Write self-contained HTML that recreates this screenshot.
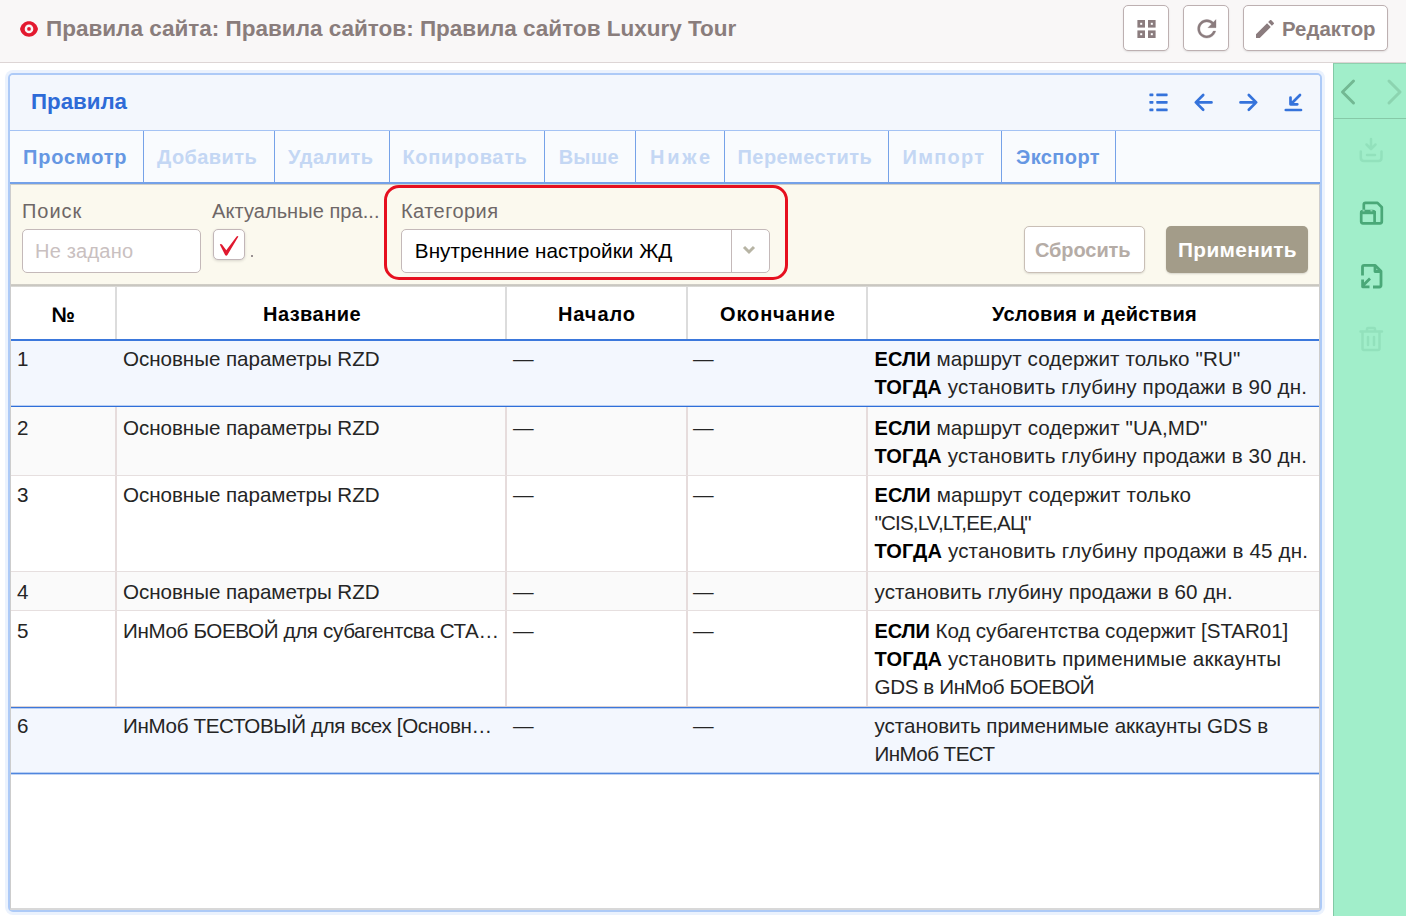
<!DOCTYPE html>
<html><head><meta charset="utf-8">
<style>
*{box-sizing:border-box;margin:0;padding:0}
html,body{width:1406px;height:916px;overflow:hidden;background:#fff;font-family:"Liberation Sans",sans-serif;color:#000}
.a{position:absolute}
.t{position:absolute;line-height:1;white-space:nowrap}
.b{font-weight:bold}
.hbtn{position:absolute;top:5px;height:46px;background:#fff;border:1px solid #bdb0b1;border-radius:5px;box-shadow:0 1px 2px rgba(0,0,0,.1)}
.sep{position:absolute;top:131px;width:1px;height:52px;background:#76a2e8}
.tt{color:#c4d7f4;font-size:20px;font-weight:bold;top:147px}
.ta{color:#6697e3}
.vl{position:absolute;width:2px;background:#e6dcdc}
.r{font-size:20.6px;color:#252525}
.r b{font-size:20px;color:#000}
</style></head><body>
<!-- header -->
<div class="a" style="left:0;top:0;width:1406px;height:62px;background:#f9f7f7"></div>
<div class="a" style="left:0;top:62px;width:1406px;height:1px;background:#ddd5d5"></div>
<svg class="a" style="left:16px;top:16px" width="28" height="26" viewBox="16 16 28 26"><path d="M20 28.9C22.5 18.6 35.5 18.6 38 28.9C35.5 39.2 22.5 39.2 20 28.9Z" fill="#e3192f"/><circle cx="29" cy="28.9" r="4.3" fill="#f9f7f7"/><circle cx="29" cy="28.9" r="1.9" fill="#e3192f"/></svg>
<div class="t b" style="left:46px;top:17.5px;font-size:22.5px;color:#8a7d7c">Правила сайта: Правила сайтов: Правила сайтов Luxury Tour</div>
<div class="hbtn" style="left:1123px;width:46px"></div>
<svg class="a" style="left:1137px;top:20px" width="19" height="19" viewBox="0 0 19 19"><g fill="#8b7c7e"><rect x="0.4" y="0" width="7.6" height="7.6"/><rect x="11" y="0" width="7.6" height="7.6"/><rect x="0.4" y="10.4" width="7.6" height="7.6"/><rect x="11" y="10.4" width="7.6" height="7.6"/></g><g fill="#fff"><rect x="3.2" y="2.8" width="2" height="2"/><rect x="13.8" y="2.8" width="2" height="2"/><rect x="3.2" y="13.2" width="2" height="2"/><rect x="13.8" y="13.2" width="2" height="2"/></g></svg>
<div class="hbtn" style="left:1183px;width:46px"></div>
<svg class="a" style="left:1192.7px;top:15.3px" width="27.6" height="27.6" viewBox="0 0 24 24"><path fill="#8b7c7e" stroke="#8b7c7e" stroke-width="0.3" d="M17.65 6.35C16.2 4.9 14.21 4 12 4c-4.42 0-7.99 3.58-7.99 8s3.57 8 7.99 8c3.730 0 6.84-2.55 7.73-6h-2.08c-.82 2.33-3.04 4-5.65 4-3.31 0-6-2.690-6-6s2.69-6 6-6c1.66 0 3.14.69 4.22 1.78L13 11h7V4l-2.35 2.35z"/></svg>
<div class="hbtn" style="left:1243px;width:145px"></div>
<svg class="a" style="left:1253px;top:16.5px" width="24" height="24" viewBox="0 0 24 24"><path fill="#8b7c7e" d="M3 17.25V21h3.75L17.81 9.94l-3.75-3.75L3 17.25zM20.71 7.04c.39-.39.39-1.02 0-1.41l-2.34-2.34c-.39-.39-1.02-.39-1.41 0l-1.830 1.83 3.75 3.75 1.83-1.83z"/></svg>
<div class="t b" style="left:1282px;top:19.2px;font-size:20.4px;color:#8a7d7c">Редактор</div>

<!-- sidebar -->
<div class="a" style="left:1333px;top:63px;width:73px;height:853px;background:#a1eeca;border-left:1px solid #83c9a6;border-top:1px solid #8fd0ae"></div>
<div class="a" style="left:1334px;top:118px;width:72px;height:1px;background:#86c9a7"></div>
<svg class="a" style="left:1333px;top:63px" width="73" height="56" viewBox="0 0 73 56"><path d="M20.5 18L9.5 29L20.5 40" fill="none" stroke="#72b893" stroke-width="3" stroke-linecap="round" stroke-linejoin="round"/><path d="M56 18L67 29L56 40" fill="none" stroke="#8cd4b0" stroke-width="3" stroke-linecap="round" stroke-linejoin="round"/></svg>

<!-- panel frame -->
<div class="a" style="left:8px;top:73px;width:1314px;height:839px;border:2px solid #adcaf7;border-radius:5px;box-shadow:0 0 0 3px #ebf2fd;background:#fff"></div>
<div class="a" style="left:10px;top:75px;width:1310px;height:55px;background:#f3f7fd;border-radius:4px 4px 0 0"></div>
<div class="a" style="left:10px;top:130px;width:1310px;height:1px;background:#a5c3f4"></div>
<div class="t b" style="left:31px;top:91px;font-size:22.3px;color:#2e6bd7">Правила</div>
<div class="a" style="left:10px;top:131px;width:1310px;height:51px;background:#f9fbfe"></div>
<div class="a" style="left:10px;top:182px;width:1310px;height:1.5px;background:#74a1e8"></div>
<div class="a" style="left:10px;top:183.5px;width:1310px;height:1px;background:#cfcfc8"></div>

<div class="sep" style="left:143px"></div>
<div class="sep" style="left:274px"></div>
<div class="sep" style="left:389px"></div>
<div class="sep" style="left:543.5px"></div>
<div class="sep" style="left:635px"></div>
<div class="sep" style="left:724px"></div>
<div class="sep" style="left:888px"></div>
<div class="sep" style="left:1001px"></div>
<div class="sep" style="left:1115px"></div>
<div class="t tt ta" style="left:23px;letter-spacing:0.798px">Просмотр</div>
<div class="t tt" style="left:157px;letter-spacing:0.403px">Добавить</div>
<div class="t tt" style="left:288px;letter-spacing:0.5px">Удалить</div>
<div class="t tt" style="left:402.5px;letter-spacing:0.655px">Копировать</div>
<div class="t tt" style="left:558.7px;letter-spacing:0.234px">Выше</div>
<div class="t tt" style="left:650px;letter-spacing:2.802px">Ниже</div>
<div class="t tt" style="left:737.5px;letter-spacing:0.47px">Переместить</div>
<div class="t tt" style="left:902.5px;letter-spacing:1.26px">Импорт</div>
<div class="t tt ta" style="left:1016px;letter-spacing:0.417px">Экспорт</div>

<!-- filter -->
<div class="a" style="left:10px;top:184.5px;width:1310px;height:99.5px;background:#fbf9ee"></div>
<div class="a" style="left:10px;top:284px;width:1310px;height:3px;background:linear-gradient(#d3d0c8,#c9c7c1,#e2e1de)"></div>

<div class="t" style="left:22px;top:201px;font-size:20px;color:#6e6767;letter-spacing:0.95px">Поиск</div>
<div class="a" style="left:22px;top:229px;width:179px;height:44px;background:#fff;border:1px solid #c4b9b9;border-radius:5px"></div>
<div class="t" style="left:35px;top:240.8px;font-size:20px;color:#c9c0c0;letter-spacing:0.208px">Не задано</div>
<div class="t" style="left:212px;top:201px;font-size:20px;color:#6e6767;letter-spacing:0.062px">Актуальные пра...</div>
<div class="a" style="left:212.5px;top:228.8px;width:32px;height:31.7px;background:#fff;border:1.5px solid #c2b6b8;border-radius:5px;box-shadow:0 1px 3px rgba(0,0,0,.15)"></div>
<svg class="a" style="left:210px;top:226px" width="36" height="36" viewBox="210 226 36 36"><path d="M219.8 244.6Q220.8 243.6 222 244.6L226.3 250.2L236.6 236.6Q237.6 235.6 238.4 236.6L227.4 255Q226.3 256.4 225.1 255Z" fill="#e0192f"/></svg>
<div class="a" style="left:250.8px;top:255.2px;width:1.8px;height:1.8px;background:#9a9292"></div>
<div class="t" style="left:401px;top:201px;font-size:20px;color:#6e6767;letter-spacing:0.438px">Категория</div>
<div class="a" style="left:401px;top:229px;width:369px;height:44px;background:#fff;border:1px solid #c4b9b9;border-radius:5px"></div>
<div class="a" style="left:731px;top:230px;width:1px;height:42px;background:#c4b9b9"></div>
<svg class="a" style="left:741px;top:244px" width="16" height="12" viewBox="0 0 16 12"><path d="M3 3L8 8L13 3" fill="none" stroke="#b7b4a4" stroke-width="3"/></svg>
<div class="t" style="left:414.8px;top:240.6px;font-size:20.7px;color:#000;letter-spacing:0.047px">Внутренние настройки ЖД</div>
<div class="a" style="left:384px;top:185px;width:404px;height:95px;border:3px solid #e6101f;border-radius:15px"></div>
<div class="a" style="left:1024px;top:226px;width:121px;height:47px;background:#fff;border:1.5px solid #c9bfb6;border-radius:5px;box-shadow:0 1px 2px rgba(0,0,0,.12)"></div>
<div class="t b" style="left:1035px;top:239.5px;font-size:20px;color:#b5aca6;letter-spacing:-0.084px">Сбросить</div>
<div class="a" style="left:1166px;top:225.5px;width:142px;height:47.5px;background:#a39c89;border-radius:5px;box-shadow:0 1px 2px rgba(0,0,0,.15)"></div>
<div class="t b" style="left:1178px;top:239.5px;font-size:20.8px;color:#fff;letter-spacing:0.367px">Применить</div>

<!-- table header -->
<div class="a" style="left:10px;top:287px;width:1310px;height:52px;background:#fff"></div>
<div class="a" style="left:10px;top:339px;width:1310px;height:2px;background:#3b78dc"></div>
<div class="vl" style="left:114.5px;top:287px;height:52px;background:#dcdcdc"></div>
<div class="vl" style="left:505px;top:287px;height:52px;background:#dcdcdc"></div>
<div class="vl" style="left:685.5px;top:287px;height:52px;background:#dcdcdc"></div>
<div class="vl" style="left:865.5px;top:287px;height:52px;background:#dcdcdc"></div>
<div class="t b" style="left:51.5px;top:303.5px;font-size:21px;letter-spacing:0px">№</div>
<div class="t b" style="left:263px;top:304px;font-size:20px;letter-spacing:0.454px">Название</div>
<div class="t b" style="left:558px;top:304px;font-size:20px;letter-spacing:0.9px">Начало</div>
<div class="t b" style="left:720px;top:304px;font-size:20px;letter-spacing:0.875px">Окончание</div>
<div class="t b" style="left:992px;top:304px;font-size:20px;letter-spacing:0.279px">Условия и действия</div>
<!-- rows -->
<div class="a" style="left:10px;top:341px;width:1310px;height:65px;background:#f3f7fe"></div>
<div class="a" style="left:10px;top:405px;width:1310px;height:3px;background:linear-gradient(rgba(47,111,217,.3) 33.3%,#2f6fd9 33.3%,#2f6fd9 66.6%,rgba(47,111,217,.3) 66.6%)"></div>
<div class="t r" style="left:17px;top:348.76px">1</div>
<div class="t r" style="left:123px;top:348.76px;letter-spacing:-0.048px">Основные параметры RZD</div>
<div class="t r" style="left:513px;top:348.76px">—</div>
<div class="t r" style="left:693px;top:348.76px">—</div>
<div class="t r" style="left:874.5px;top:348.76px;letter-spacing:0.106px"><b>ЕСЛИ</b> маршрут содержит только "RU"</div>
<div class="t r" style="left:874.5px;top:376.76px;letter-spacing:0.125px"><b>ТОГДА</b> установить глубину продажи в 90 дн.</div>
<div class="a" style="left:10px;top:407px;width:1310px;height:68px;background:#fafafa"></div>
<div class="vl" style="left:114.5px;top:407px;height:68px"></div>
<div class="vl" style="left:505px;top:407px;height:68px"></div>
<div class="vl" style="left:685.5px;top:407px;height:68px"></div>
<div class="vl" style="left:865.5px;top:407px;height:68px"></div>
<div class="a" style="left:10px;top:475px;width:1310px;height:1px;background:#e6dfdf"></div>
<div class="t r" style="left:17px;top:417.66px">2</div>
<div class="t r" style="left:123px;top:417.66px;letter-spacing:-0.048px">Основные параметры RZD</div>
<div class="t r" style="left:513px;top:417.66px">—</div>
<div class="t r" style="left:693px;top:417.66px">—</div>
<div class="t r" style="left:874.5px;top:417.66px;letter-spacing:0.116px"><b>ЕСЛИ</b> маршрут содержит "UA,MD"</div>
<div class="t r" style="left:874.5px;top:445.66px;letter-spacing:0.125px"><b>ТОГДА</b> установить глубину продажи в 30 дн.</div>
<div class="a" style="left:10px;top:476px;width:1310px;height:95px;background:#ffffff"></div>
<div class="vl" style="left:114.5px;top:476px;height:95px"></div>
<div class="vl" style="left:505px;top:476px;height:95px"></div>
<div class="vl" style="left:685.5px;top:476px;height:95px"></div>
<div class="vl" style="left:865.5px;top:476px;height:95px"></div>
<div class="a" style="left:10px;top:571px;width:1310px;height:1px;background:#e6dfdf"></div>
<div class="t r" style="left:17px;top:485.36px">3</div>
<div class="t r" style="left:123px;top:485.36px;letter-spacing:-0.048px">Основные параметры RZD</div>
<div class="t r" style="left:513px;top:485.36px">—</div>
<div class="t r" style="left:693px;top:485.36px">—</div>
<div class="t r" style="left:874.5px;top:485.36px;letter-spacing:0.16px"><b>ЕСЛИ</b> маршрут содержит только</div>
<div class="t r" style="left:874.5px;top:513.36px;letter-spacing:-0.821px">"CIS,LV,LT,EE,АЦ"</div>
<div class="t r" style="left:874.5px;top:541.36px;letter-spacing:0.15px"><b>ТОГДА</b> установить глубину продажи в 45 дн.</div>
<div class="a" style="left:10px;top:572px;width:1310px;height:38px;background:#fafafa"></div>
<div class="vl" style="left:114.5px;top:572px;height:38px"></div>
<div class="vl" style="left:505px;top:572px;height:38px"></div>
<div class="vl" style="left:685.5px;top:572px;height:38px"></div>
<div class="vl" style="left:865.5px;top:572px;height:38px"></div>
<div class="a" style="left:10px;top:610px;width:1310px;height:1px;background:#e6dfdf"></div>
<div class="t r" style="left:17px;top:581.56px">4</div>
<div class="t r" style="left:123px;top:581.56px;letter-spacing:-0.048px">Основные параметры RZD</div>
<div class="t r" style="left:513px;top:581.56px">—</div>
<div class="t r" style="left:693px;top:581.56px">—</div>
<div class="t r" style="left:874.5px;top:581.56px;letter-spacing:0.097px">установить глубину продажи в 60 дн.</div>
<div class="a" style="left:10px;top:611px;width:1310px;height:95px;background:#ffffff"></div>
<div class="vl" style="left:114.5px;top:611px;height:95px"></div>
<div class="vl" style="left:505px;top:611px;height:95px"></div>
<div class="vl" style="left:685.5px;top:611px;height:95px"></div>
<div class="vl" style="left:865.5px;top:611px;height:95px"></div>
<div class="a" style="left:10px;top:706px;width:1310px;height:1px;background:#e6dfdf"></div>
<div class="t r" style="left:17px;top:620.56px">5</div>
<div class="t r" style="left:123px;top:620.56px;letter-spacing:-0.355px">ИнМоб БОЕВОЙ для субагентсва СТА…</div>
<div class="t r" style="left:513px;top:620.56px">—</div>
<div class="t r" style="left:693px;top:620.56px">—</div>
<div class="t r" style="left:874.5px;top:620.56px;letter-spacing:-0.088px"><b>ЕСЛИ</b> Код субагентства содержит [STAR01]</div>
<div class="t r" style="left:874.5px;top:648.56px;letter-spacing:0.176px"><b>ТОГДА</b> установить применимые аккаунты</div>
<div class="t r" style="left:874.5px;top:676.56px;letter-spacing:-0.373px">GDS в ИнМоб БОЕВОЙ</div>
<div class="a" style="left:10px;top:708px;width:1310px;height:65px;background:#f3f7fe"></div>
<div class="a" style="left:10px;top:772px;width:1310px;height:3px;background:linear-gradient(rgba(47,111,217,.3) 33.3%,#4f86de 33.3%,#4f86de 66.6%,rgba(47,111,217,.3) 66.6%)"></div>
<div class="t r" style="left:17px;top:716.26px">6</div>
<div class="t r" style="left:123px;top:716.26px;letter-spacing:-0.346px">ИнМоб ТЕСТОВЫЙ для всех [Основн…</div>
<div class="t r" style="left:513px;top:716.26px">—</div>
<div class="t r" style="left:693px;top:716.26px">—</div>
<div class="t r" style="left:874.5px;top:716.26px;letter-spacing:-0.035px">установить применимые аккаунты GDS в</div>
<div class="t r" style="left:874.5px;top:744.26px;letter-spacing:-0.568px">ИнМоб ТЕСТ</div>
<div class="a" style="left:10px;top:706px;width:1310px;height:1px;background:#e6dfdf"></div>
<div class="a" style="left:10px;top:706px;width:1310px;height:3px;background:linear-gradient(rgba(220,210,210,1) 33.3%,#3c78db 33.3%,#3c78db 66.6%,rgba(47,111,217,.3) 66.6%)"></div>
<div class="a" style="left:10px;top:183.5px;width:1310px;height:726.5px;border:1px solid #cdcdcd;border-bottom:2px solid #d8d8d8;border-top:1px solid #cfcfc8"></div>
<!-- panel header icons -->
<svg class="a" style="left:1146px;top:90px" width="160" height="25" viewBox="1146 90 160 25">
 <g fill="#3573db">
  <rect x="1149.4" y="93.5" width="4" height="2.7" rx="0.6"/><rect x="1156.3" y="93.5" width="11.3" height="2.7" rx="0.6"/>
  <rect x="1149.4" y="101" width="4" height="2.7" rx="0.6"/><rect x="1156.3" y="101" width="11.3" height="2.7" rx="0.6"/>
  <rect x="1149.4" y="108.6" width="4" height="2.7" rx="0.6"/><rect x="1156.3" y="108.6" width="11.3" height="2.7" rx="0.6"/>
 </g>
 <g fill="none" stroke="#3573db" stroke-width="2.7" stroke-linecap="round" stroke-linejoin="round">
  <path d="M1211.5 102.4H1196M1203.2 95L1195.8 102.4L1203.2 109.8"/>
  <path d="M1240.5 102.4H1256M1248.8 95L1256.2 102.4L1248.8 109.8"/>
  <path d="M1300 95L1291 104M1290.5 97.5V104.3H1297.3"/>
  <path d="M1285.8 110H1301"/>
 </g>
</svg>
<!-- sidebar icons -->
<svg class="a" style="left:1334px;top:120px" width="72" height="240" viewBox="1334 120 72 240">
 <g fill="none" stroke="#92e1bc" stroke-width="2.5" stroke-linecap="round" stroke-linejoin="round">
  <path d="M1371 139V148.5M1366.5 144.5L1371 149L1375.5 144.5"/>
  <path d="M1360.8 151.5V157.5Q1360.8 161 1364 161H1378.5Q1381.5 161 1381.5 157.5V151.5"/>
  <path d="M1367 155H1375"/>
 </g>
 <g fill="none" stroke="#4aa878" stroke-width="2.7" stroke-linejoin="round">
  <path d="M1363.8 210.5V204.6Q1363.8 202.9 1365.5 202.9H1377.5L1381.8 207.2V221.6Q1381.8 223.4 1380 223.4H1363Q1361.2 223.4 1361.2 221.6V213Q1361.2 211.2 1363 211.2H1372.8Q1374.6 211.2 1374.6 213V223.4"/>
 </g>
 <rect x="1360" y="211" width="15.9" height="3.2" fill="#4aa878"/>
 <rect x="1362.6" y="209.6" width="2" height="1.8" fill="#8fd8b3"/>
 <rect x="1370.4" y="209.6" width="2" height="1.8" fill="#8fd8b3"/>
 <g fill="none" stroke="#4aa878" stroke-width="2.8" stroke-linejoin="round">
  <path d="M1362.5 275.5V267Q1362.5 265.3 1364.2 265.3H1375L1381 271.3V285.3Q1381 287 1379.3 287H1373"/>
  <path d="M1375 265.5V271.5H1381"/>
  <path d="M1370 278.5L1363.5 285M1362.6 279.5V286.8H1369.5"/>
 </g>
 <g fill="none" stroke="#92e1bc" stroke-width="2.5" stroke-linecap="round" stroke-linejoin="round">
  <path d="M1360.5 331.5H1382M1367 331V329Q1367 328 1368 328H1374Q1375 328 1375 329V331"/>
  <path d="M1362.5 332V348.5Q1362.5 350 1364 350H1378Q1379.5 350 1379.5 348.5V332"/>
  <path d="M1368 337V345M1374 337V345"/>
 </g>
</svg>

</body></html>
